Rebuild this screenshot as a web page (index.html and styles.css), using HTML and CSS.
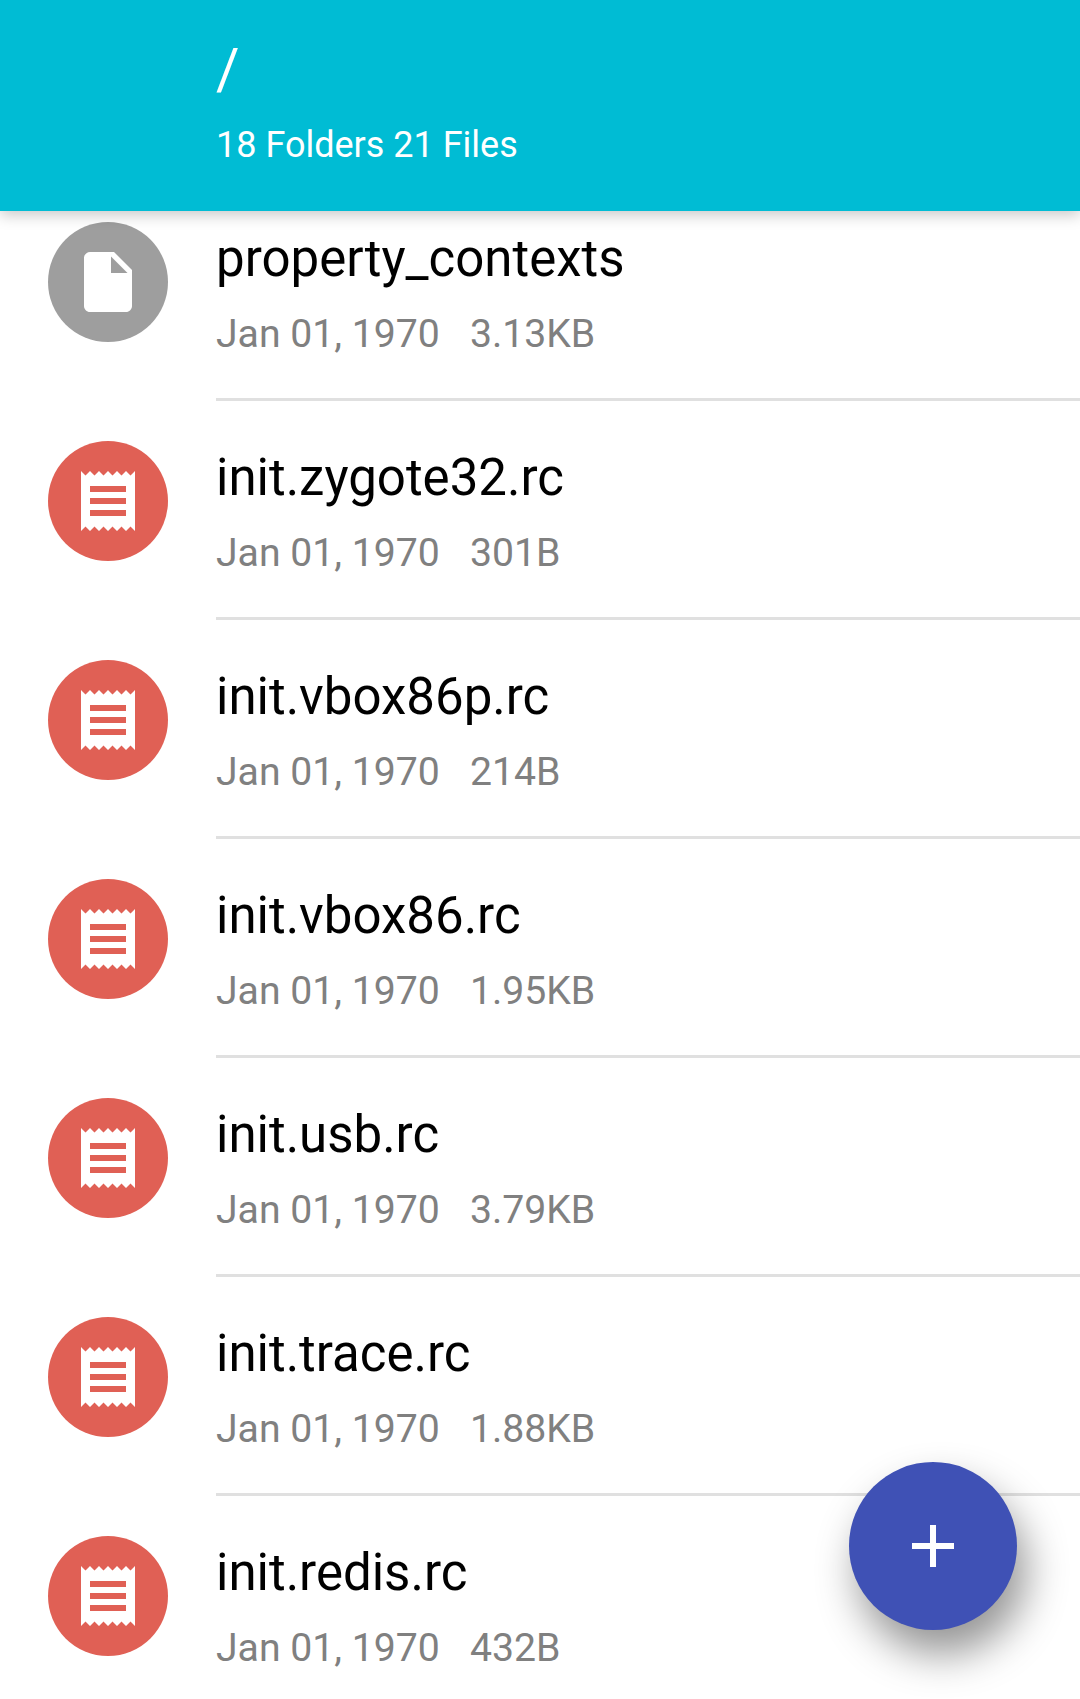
FILE: index.html
```html
<!DOCTYPE html>
<html lang="en">
<head>
  <meta charset="UTF-8">
  <meta name="viewport" content="width=device-width, initial-scale=1.0">
  <link rel="stylesheet" href="styles.css">
  <title>File Manager</title>
</head>
<body>
  <svg class="defs" width="0" height="0">
    <symbol id="icon-file" viewBox="0 0 24 24">
      <path d="M6 2c-1.1 0-2 .9-2 2v16c0 1.1.9 2 2 2h12c1.100 0 2-.9 2-2V8l-6-6H6zm7 7V3.500L18.500 9H13z"/>
    </symbol>
    <symbol id="icon-receipt" viewBox="0 0 24 24">
      <path d="M18 17H6v-2h12v2zm0-4H6v-2h12v2zm0-4H6V7h12v2zM3 22l1.500-1.500L6 22l1.500-1.500L9 22l1.500-1.500L12 22l1.500-1.500L15 22l1.500-1.500L18 22l1.500-1.500L21 22V2l-1.500 1.500L18 2l-1.500 1.500L15 2l-1.500 1.500L12 2l-1.500 1.500L9 2 7.500 3.500 6 2 4.500 3.500 3 2v20z"/>
    </symbol>
    <symbol id="icon-add" viewBox="0 0 24 24">
      <path d="M19 13h-6v6h-2v-6H5v-2h6V5h2v6h6v2z"/>
    </symbol>
  </svg>

  <!-- current folder -->
  <header class="toolbar">
    <div class="path">/</div>
    <div class="counts">18 Folders 21 Files</div>
  </header>

  <!-- file list, scrolled a little under the toolbar -->
  <ul class="files">
    <li class="file">
      <div class="badge badge-plain"><svg class="badge-icon"><use href="#icon-file"/></svg></div>
      <div class="info">
        <div class="name">property_contexts</div>
        <div class="meta"><span>Jan 01, 1970</span><span>3.13KB</span></div>
      </div>
    </li>
    <li class="file">
      <div class="badge badge-text"><svg class="badge-icon"><use href="#icon-receipt"/></svg></div>
      <div class="info">
        <div class="name">init.zygote32.rc</div>
        <div class="meta"><span>Jan 01, 1970</span><span>301B</span></div>
      </div>
    </li>
    <li class="file">
      <div class="badge badge-text"><svg class="badge-icon"><use href="#icon-receipt"/></svg></div>
      <div class="info">
        <div class="name">init.vbox86p.rc</div>
        <div class="meta"><span>Jan 01, 1970</span><span>214B</span></div>
      </div>
    </li>
    <li class="file">
      <div class="badge badge-text"><svg class="badge-icon"><use href="#icon-receipt"/></svg></div>
      <div class="info">
        <div class="name">init.vbox86.rc</div>
        <div class="meta"><span>Jan 01, 1970</span><span>1.95KB</span></div>
      </div>
    </li>
    <li class="file">
      <div class="badge badge-text"><svg class="badge-icon"><use href="#icon-receipt"/></svg></div>
      <div class="info">
        <div class="name">init.usb.rc</div>
        <div class="meta"><span>Jan 01, 1970</span><span>3.79KB</span></div>
      </div>
    </li>
    <li class="file">
      <div class="badge badge-text"><svg class="badge-icon"><use href="#icon-receipt"/></svg></div>
      <div class="info">
        <div class="name">init.trace.rc</div>
        <div class="meta"><span>Jan 01, 1970</span><span>1.88KB</span></div>
      </div>
    </li>
    <li class="file">
      <div class="badge badge-text"><svg class="badge-icon"><use href="#icon-receipt"/></svg></div>
      <div class="info">
        <div class="name">init.redis.rc</div>
        <div class="meta"><span>Jan 01, 1970</span><span>432B</span></div>
      </div>
    </li>
  </ul>

  <button class="fab"><svg class="fab-icon"><use href="#icon-add"/></svg></button>
</body>
</html>
```

FILE: styles.css
```css
html, body {
  height: 100%;
}

body {
  position: relative;
  margin: 0;
  overflow: hidden;
  background-color: #fff;
  font-family: Roboto, "Liberation Sans", sans-serif;
}

.defs {
  position: absolute;
}

.toolbar {
  position: relative;
  z-index: 2;
  box-sizing: border-box;
  height: 211px;
  padding: 36px 0 0 216px;
  background-color: #00bcd4;
  color: #fff;
  box-shadow: 0 4px 14px rgba(0, 0, 0, 0.22);
}

.path {
  font-size: 57px;
  line-height: 68px;
}

.counts {
  margin-top: 20px;
  font-size: 36px;
  line-height: 42px;
}

.files {
  margin: -29px 0 0;
  padding: 0;
  list-style: none;
}

.file {
  display: flex;
  height: 219px;
}

.badge {
  display: flex;
  flex: none;
  align-items: center;
  justify-content: center;
  width: 120px;
  height: 120px;
  margin: 40px 48px 0;
  border-radius: 50%;
}

.badge-plain {
  background-color: #9e9e9e;
}

.badge-text {
  background-color: #e06055;
}

.badge-icon {
  width: 72px;
  height: 72px;
  fill: #fff;
}

.info {
  flex: 1;
  box-sizing: border-box;
  padding-top: 47px;
  border-bottom: 3px solid #e0e0e0;
}

.name {
  font-size: 51px;
  line-height: 60px;
  color: #000;
}

.meta {
  display: flex;
  gap: 30px;
  margin-top: 22px;
  font-size: 39.2px;
  line-height: 46px;
  color: #808080;
}

.fab {
  position: absolute;
  right: 63px;
  bottom: 69px;
  z-index: 3;
  display: flex;
  align-items: center;
  justify-content: center;
  width: 168px;
  height: 168px;
  padding: 0;
  border: 0;
  border-radius: 50%;
  background-color: #3f51b5;
  box-shadow: 9px 24px 42px rgba(0, 0, 0, 0.42);
}

.fab-icon {
  width: 72px;
  height: 72px;
  fill: #fff;
}
```
